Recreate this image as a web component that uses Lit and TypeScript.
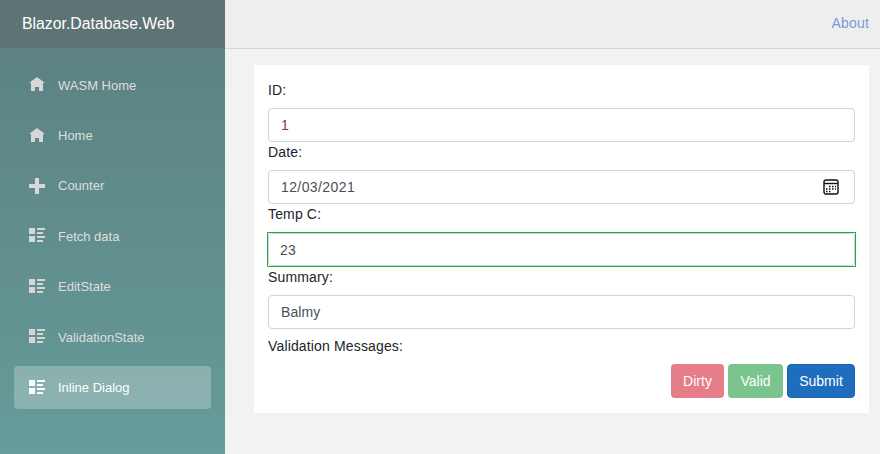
import { LitElement, html, css, svg } from 'lit';
import { customElement } from 'lit/decorators.js';

const home = svg`<path d="M4 0l-4 3h1v4h2v-2h2v2h2v-4.03l1 .03-4-3z"/>`;
const plus = svg`<path d="M3 0v3h-3v2h3v3h2v-3h3v-2h-3v-3h-2z"/>`;
const list = svg`<path d="M0 0v3h3v-3h-3zm4 0v1h4v-1h-4zm0 2v1h3v-1h-3zm-4 2v3h3v-3h-3zm4 0v1h4v-1h-4zm0 2v1h3v-1h-3z"/>`;

const navItems = [
  { label: 'WASM Home', icon: home },
  { label: 'Home', icon: home },
  { label: 'Counter', icon: plus },
  { label: 'Fetch data', icon: list },
  { label: 'EditState', icon: list },
  { label: 'ValidationState', icon: list },
  { label: 'Inline Dialog', icon: list, active: true },
];

@customElement('app-root')
export class AppRoot extends LitElement {
  static styles = css`
    :host {
      display: flex;
      height: 454px;
      overflow: hidden;
      font-family: "Liberation Sans", Arial, sans-serif;
      font-size: 14px;
      color: #212529;
      background: #f2f2f2;
    }

    .sidebar {
      width: 225px;
      flex: none;
      background: linear-gradient(180deg, #5b7f7f 0%, #669c9a 100%);
    }

    .brand {
      height: 48px;
      padding-left: 22px;
      display: flex;
      align-items: center;
      background: #5e7373;
      color: #fff;
      font-size: 15.8px;
    }

    nav {
      padding: 15.7px 14px 0;
    }

    .nav-item {
      height: 43px;
      margin-bottom: 7.4px;
      padding-left: 15px;
      display: flex;
      align-items: center;
      border-radius: 4px;
      color: #dedede;
      font-size: 13px;
    }

    .nav-item svg {
      width: 16px;
      height: 16px;
      margin-right: 13px;
      fill: #d7d7d7;
    }

    .nav-item.active {
      background: rgba(255, 255, 255, 0.25);
      color: #fff;
    }

    .nav-item.active svg {
      fill: #fff;
    }

    main {
      flex: 1;
      min-width: 0;
    }

    .top-row {
      height: 46px;
      padding: 0 11px 2px 0;
      display: flex;
      align-items: center;
      justify-content: flex-end;
      background: #eeeeee;
      border-bottom: 1px solid #d6d5d5;
    }

    .top-row a {
      color: #7b9ad8;
      letter-spacing: 0.2px;
      text-decoration: none;
    }

    .card {
      margin: 16px 11px 0 29px;
      padding: 15px 14px;
      background: #fff;
    }

    label {
      display: block;
      height: 20px;
      line-height: 20px;
      margin-bottom: 8px;
      letter-spacing: 0.15px;
    }

    .field {
      height: 34px;
      padding: 0 15px 0 12px;
      box-sizing: border-box;
      display: flex;
      align-items: center;
      justify-content: space-between;
      border: 1px solid #ced4da;
      border-radius: 4px;
      color: #495057;
      letter-spacing: 0.1px;
    }

    .id-value {
      color: #7b3a46;
    }

    .date-value {
      letter-spacing: 0.4px;
    }

    .modified-wrap {
      margin: 0 -1px;
      border: 1px solid #28a745;
    }

    .modified-wrap .field {
      height: 33px;
      padding-left: 11px;
    }

    .msg {
      margin-top: 9px;
      letter-spacing: 0.15px;
    }

    .actions {
      display: flex;
      justify-content: flex-end;
      gap: 4px;
      margin-top: 10px;
    }

    button {
      height: 34px;
      padding: 0;
      font: inherit;
      color: #fff;
      border: 1px solid transparent;
      border-radius: 4px;
    }

    .dirty { width: 53px; background: #e57e88; }
    .valid { width: 55px; background: #7cc48d; }
    .submit { width: 68px; background: #1f6ebd; border-color: #1b66b3; }
  `;

  render() {
    return html`
      <aside class="sidebar">
        <div class="brand">Blazor.Database.Web</div>
        <nav>
          ${navItems.map(
            (item) => html`
              <div class="nav-item ${item.active ? 'active' : ''}">
                <svg viewBox="0 0 8 8">${item.icon}</svg>
                <span>${item.label}</span>
              </div>
            `
          )}
        </nav>
      </aside>
      <main>
        <div class="top-row"><a href="#">About</a></div>
        <div class="card">
          <label>ID:</label>
          <div class="field"><span class="id-value">1</span></div>
          <label>Date:</label>
          <div class="field">
            <span class="date-value">12/03/2021</span>
            <svg width="16" height="16" viewBox="0 0 16 16" fill="none">
              <rect x="1" y="1" width="14" height="14" rx="2" stroke="#111" stroke-width="1.4"/>
              <path d="M1 4.5 H15" stroke="#111" stroke-width="1.4"/>
              <path d="M6 7.5 h1.5 M9 7.5 h1.5 M12 7.5 h1 M3 10 h1.5 M6 10 h1.5 M9 10 h1.5 M12 10 h1 M3 12.5 h1.5 M6 12.5 h1.5" stroke="#111" stroke-width="1.3"/>
            </svg>
          </div>
          <label>Temp C:</label>
          <div class="modified-wrap">
            <div class="field"><span>23</span></div>
          </div>
          <label>Summary:</label>
          <div class="field"><span>Balmy</span></div>
          <div class="msg">Validation Messages:</div>
          <div class="actions">
            <button class="dirty">Dirty</button>
            <button class="valid">Valid</button>
            <button class="submit">Submit</button>
          </div>
        </div>
      </main>
    `;
  }
}
